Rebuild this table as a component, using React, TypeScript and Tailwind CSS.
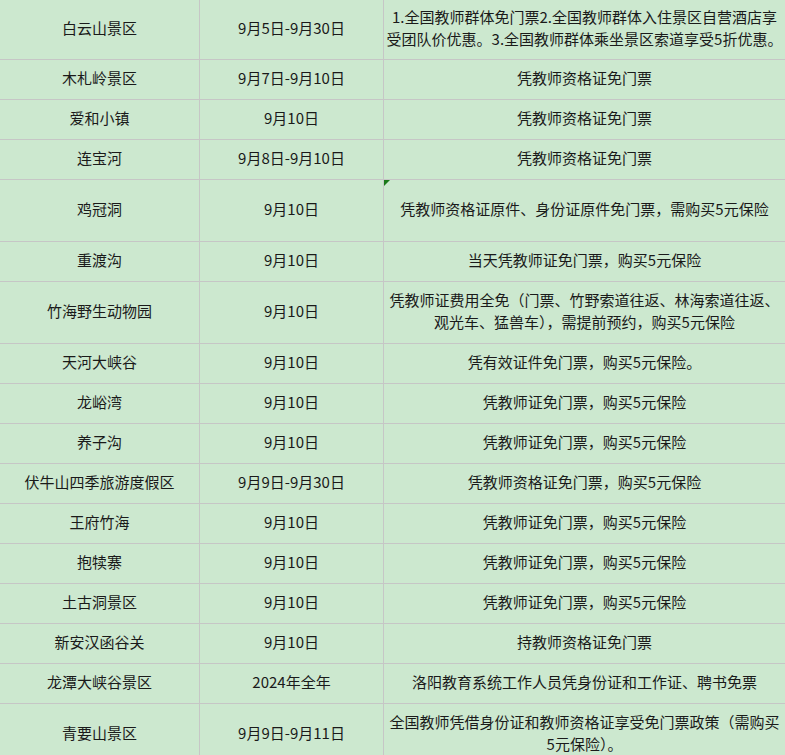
import React from "react";

type Row = { name: string; date: string; desc: React.ReactNode; h: string; mark?: boolean };

const rows: Row[] = [
  {
    name: "白云山景区",
    date: "9月5日-9月30日",
    desc: (
      <>
        1.全国教师群体免门票2.全国教师群体入住景区自营酒店享
        <br />
        受团队价优惠。3.全国教师群体乘坐景区索道享受5折优惠。
      </>
    ),
    h: "h-[60px]",
  },
  { name: "木札岭景区", date: "9月7日-9月10日", desc: "凭教师资格证免门票", h: "h-[40px]" },
  { name: "爱和小镇", date: "9月10日", desc: "凭教师资格证免门票", h: "h-[40px]" },
  { name: "连宝河", date: "9月8日-9月10日", desc: "凭教师资格证免门票", h: "h-[40px]" },
  {
    name: "鸡冠洞",
    date: "9月10日",
    desc: "凭教师资格证原件、身份证原件免门票，需购买5元保险",
    h: "h-[62px]",
    mark: true,
  },
  { name: "重渡沟", date: "9月10日", desc: "当天凭教师证免门票，购买5元保险", h: "h-[40px]" },
  {
    name: "竹海野生动物园",
    date: "9月10日",
    desc: (
      <>
        凭教师证费用全免（门票、竹野索道往返、林海索道往返、
        <br />
        观光车、猛兽车），需提前预约，购买5元保险
      </>
    ),
    h: "h-[62px]",
  },
  { name: "天河大峡谷", date: "9月10日", desc: "凭有效证件免门票，购买5元保险。", h: "h-[40px]" },
  { name: "龙峪湾", date: "9月10日", desc: "凭教师证免门票，购买5元保险", h: "h-[40px]" },
  { name: "养子沟", date: "9月10日", desc: "凭教师证免门票，购买5元保险", h: "h-[40px]" },
  { name: "伏牛山四季旅游度假区", date: "9月9日-9月30日", desc: "凭教师资格证免门票，购买5元保险", h: "h-[40px]" },
  { name: "王府竹海", date: "9月10日", desc: "凭教师证免门票，购买5元保险", h: "h-[40px]" },
  { name: "抱犊寨", date: "9月10日", desc: "凭教师证免门票，购买5元保险", h: "h-[40px]" },
  { name: "土古洞景区", date: "9月10日", desc: "凭教师证免门票，购买5元保险", h: "h-[40px]" },
  { name: "新安汉函谷关", date: "9月10日", desc: "持教师资格证免门票", h: "h-[40px]" },
  { name: "龙潭大峡谷景区", date: "2024年全年", desc: "洛阳教育系统工作人员凭身份证和工作证、聘书免票", h: "h-[40px]" },
  {
    name: "青要山景区",
    date: "9月9日-9月11日",
    desc: (
      <>
        全国教师凭借身份证和教师资格证享受免门票政策（需购买
        <br />
        5元保险）。
      </>
    ),
    h: "h-[62px]",
  },
];

export default function App() {
  return (
    <div
      className="w-[785px] h-[755px] overflow-hidden bg-[#cce8cf] text-[#1a1a1a] text-[15px] leading-[22px]"
      style={{ fontFamily: '"Microsoft YaHei", "Noto Sans CJK SC", "Noto Sans", sans-serif' }}
    >
      {rows.map((r, i) => (
        <div key={i} className={`grid grid-cols-[200px_184px_401px] ${r.h}`}>
          <div className="flex items-center justify-center pb-[3px] border-r border-b border-[#c6c6c6] whitespace-nowrap">
            {r.name}
          </div>
          <div className="flex items-center justify-center pb-[3px] border-r border-b border-[#c6c6c6] whitespace-nowrap">
            {r.date}
          </div>
          <div className="relative flex items-center justify-center pb-[3px] text-center border-b border-[#c6c6c6] whitespace-nowrap">
            {r.mark && (
              <svg className="absolute left-0 top-0" width="6" height="6" viewBox="0 0 6 6">
                <polygon points="0,0 6,0 0,6" fill="#1a7a1a" />
              </svg>
            )}
            <span>{r.desc}</span>
          </div>
        </div>
      ))}
    </div>
  );
}
